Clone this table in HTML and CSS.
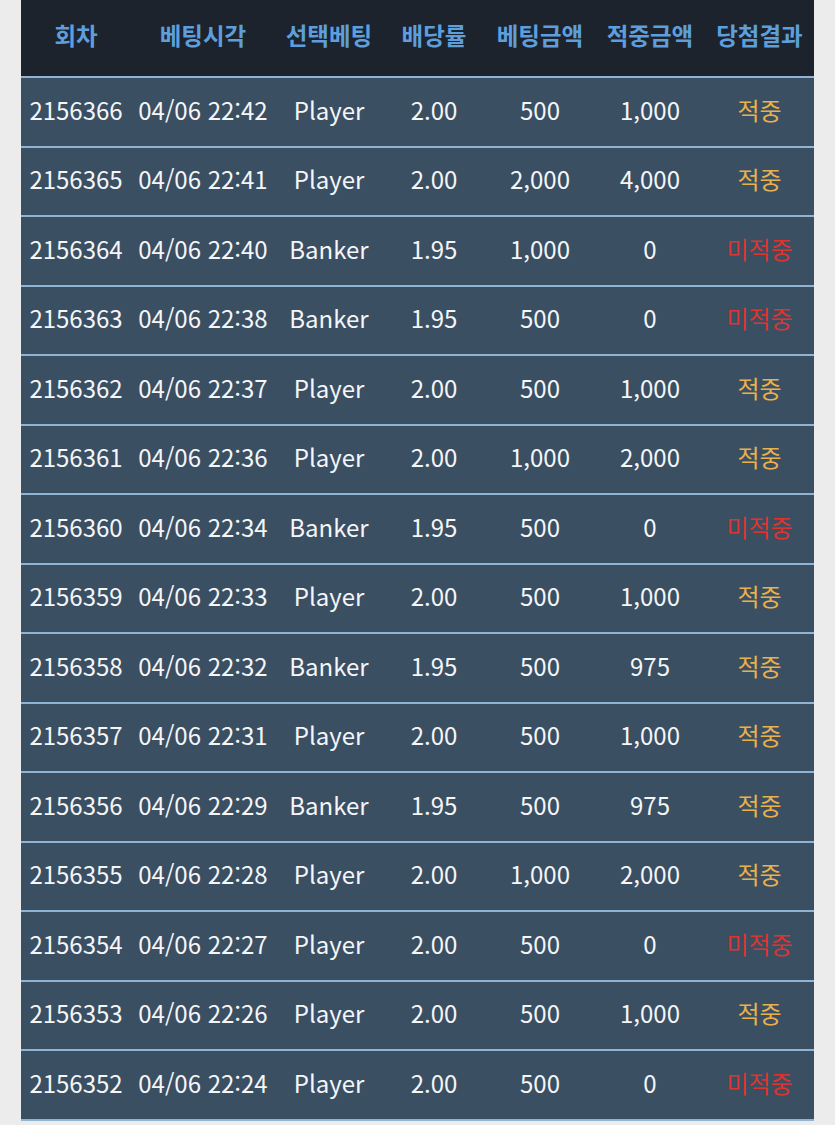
FILE: index.html
```html
<!DOCTYPE html>
<html lang="ko">
<head>
  <meta charset="UTF-8" />
  <title>베팅내역</title>
  <link rel="stylesheet" href="styles.css">
</head>
<body>
  <div class="bet-wrap">
    <table class="bet-table">
      <colgroup>
        <col style="width:110px">
        <col style="width:144px">
        <col style="width:108px">
        <col style="width:102px">
        <col style="width:110px">
        <col style="width:110px">
        <col style="width:109px">
      </colgroup>
      <thead>
        <tr>
          <th>회차</th>
          <th>베팅시각</th>
          <th>선택베팅</th>
          <th>배당률</th>
          <th>베팅금액</th>
          <th>적중금액</th>
          <th>당첨결과</th>
        </tr>
      </thead>
      <tbody id="betBody"></tbody>
    </table>
  </div>

  <script>
    const rows = [
      ['2156366', '04/06 22:42', 'Player', '2.00', '500', '1,000', true],
      ['2156365', '04/06 22:41', 'Player', '2.00', '2,000', '4,000', true],
      ['2156364', '04/06 22:40', 'Banker', '1.95', '1,000', '0', false],
      ['2156363', '04/06 22:38', 'Banker', '1.95', '500', '0', false],
      ['2156362', '04/06 22:37', 'Player', '2.00', '500', '1,000', true],
      ['2156361', '04/06 22:36', 'Player', '2.00', '1,000', '2,000', true],
      ['2156360', '04/06 22:34', 'Banker', '1.95', '500', '0', false],
      ['2156359', '04/06 22:33', 'Player', '2.00', '500', '1,000', true],
      ['2156358', '04/06 22:32', 'Banker', '1.95', '500', '975', true],
      ['2156357', '04/06 22:31', 'Player', '2.00', '500', '1,000', true],
      ['2156356', '04/06 22:29', 'Banker', '1.95', '500', '975', true],
      ['2156355', '04/06 22:28', 'Player', '2.00', '1,000', '2,000', true],
      ['2156354', '04/06 22:27', 'Player', '2.00', '500', '0', false],
      ['2156353', '04/06 22:26', 'Player', '2.00', '500', '1,000', true],
      ['2156352', '04/06 22:24', 'Player', '2.00', '500', '0', false]
    ];

    const tbody = document.getElementById('betBody');
    rows.forEach(r => {
      const tr = document.createElement('tr');
      const result = r[6]
        ? '<span class="win">적중</span>'
        : '<span class="lose">미적중</span>';
      tr.innerHTML = `
        <td>${r[0]}</td>
        <td>${r[1]}</td>
        <td>${r[2]}</td>
        <td>${r[3]}</td>
        <td>${r[4]}</td>
        <td>${r[5]}</td>
        <td>${result}</td>
      `;
      tbody.appendChild(tr);
    });
  </script>
</body>
</html>
```

FILE: styles.css
```css
body {
  font-family: 'Noto Sans CJK KR', 'Noto Sans', sans-serif;
  background-color: #ececec;
  margin: 0;
  padding: 0 21px;
}
.bet-wrap {
  width: 793px;
}
.bet-table {
  width: 793px;
  border-collapse: collapse;
  table-layout: fixed;
  background-color: #3b4f63;
}
.bet-table thead tr {
  background-color: #1c232d;
}
.bet-table th {
  height: 70px;
  padding: 0 0 6px;
  color: #5d9fdc;
  font-size: 23.5px;
  font-weight: 700;
  line-height: 30px;
  text-align: center;
  vertical-align: middle;
  white-space: nowrap;
}
.bet-table td {
  height: 63.5px;
  padding: 0 0 4px;
  border-top: 2.5px solid #8fb4d4;
  color: #f4f6f8;
  font-size: 24px;
  line-height: 30px;
  text-align: center;
  vertical-align: middle;
  white-space: nowrap;
}
.bet-table tbody tr:last-child td {
  border-bottom: 2.5px solid #8fb4d4;
}
.win {
  color: #e9b04b;
}
.lose {
  color: #dc3530;
}
```
